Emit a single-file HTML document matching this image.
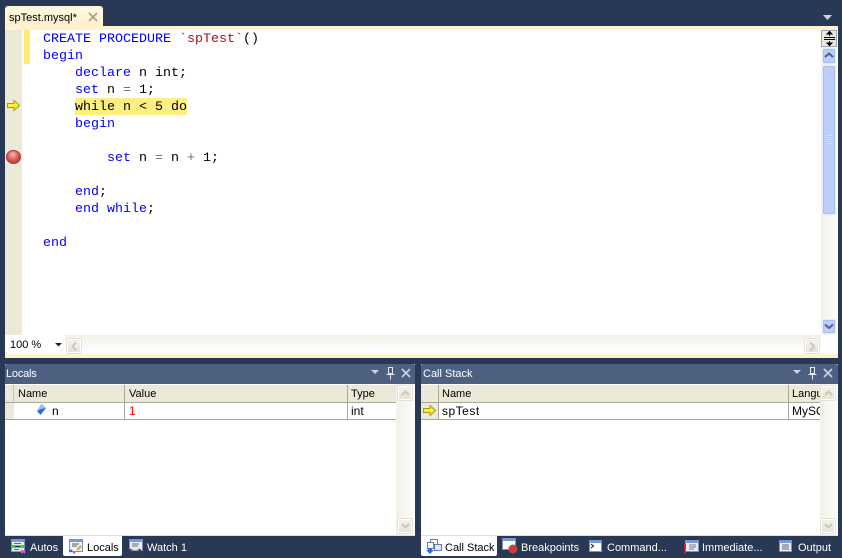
<!DOCTYPE html>
<html><head><meta charset="utf-8">
<style>
html,body{margin:0;padding:0;width:842px;height:558px;overflow:hidden;background:#293955}
div,span{position:absolute;box-sizing:border-box}
svg{position:absolute;overflow:visible}
.ui{font:11px/14px "Liberation Sans",sans-serif;color:#000;white-space:nowrap}
.r{font-size:12px}
.c{font:13.33px/17px "Liberation Mono",monospace;white-space:pre;color:#000;left:43px;height:17px}
.c b{font-weight:normal;color:#0000ff}
.c i{font-style:normal;color:#a31515}
.c u{text-decoration:none;color:#707070}
.hd{background:#ece9d8}
.sep{background:#aca899;width:1px}
.btn{border:1px solid #e4e2d6;border-radius:2px;background:linear-gradient(#f3f2ea,#e6e4d8);box-shadow:inset 0 0 0 1px #fff}
.bb{border:1px solid #e4ebfc;border-radius:2px;background:#bccffa;box-shadow:0 0 0 1px #a9c0f4 inset}
.w{color:#fff}
</style></head><body>
<!-- tab -->
<div style="left:5px;top:6px;width:98px;height:20px;background:linear-gradient(#fff8e2,#fff0cc);border-radius:3px 3px 0 0"></div>
<div class="ui" style="left:9px;top:11px;">spTest.mysql*</div>
<svg style="left:88px;top:12px" width="11" height="11"><path d="M1 1L9 9M9 1L1 9" stroke="#a39e86" stroke-width="1.600"/></svg>
<svg style="left:823px;top:15px" width="10" height="6"><path d="M0 0H9L4.500 5Z" fill="#ced4df"/></svg>

<!-- editor -->
<div style="left:5px;top:26px;width:833px;height:332px;background:#fff"></div>
<div style="left:5px;top:26px;width:833px;height:4px;background:#fff2cf"></div>
<div style="left:5px;top:354px;width:833px;height:4px;background:#fff2cf"></div>
<div style="left:5px;top:30px;width:17px;height:305px;background:#ece9d8"></div>
<div style="left:24px;top:30px;width:6px;height:34px;background:#ffe96e"></div>
<div style="left:75px;top:98px;width:112px;height:17px;background:#ffee80"></div>

<div class="c" style="top:31px"><b>CREATE</b> <b>PROCEDURE</b> <i>`spTest`</i>()</div>
<div class="c" style="top:48px"><b>begin</b></div>
<div class="c" style="top:65px">    <b>declare</b> n int;</div>
<div class="c" style="top:82px">    <b>set</b> n <u>=</u> 1;</div>
<div class="c" style="top:99px">    while n &lt; 5 do</div>
<div class="c" style="top:116px">    <b>begin</b></div>
<div class="c" style="top:150px">        <b>set</b> n <u>=</u> n <u>+</u> 1;</div>
<div class="c" style="top:184px">    <b>end</b>;</div>
<div class="c" style="top:201px">    <b>end</b> <b>while</b>;</div>
<div class="c" style="top:235px"><b>end</b></div>

<svg style="left:7px;top:100px" width="14" height="12"><path d="M.5 3.500H7V.5L12.500 5.500 7 10.500V7.500H.5Z" fill="#ffee30" stroke="#a89a20"/></svg>
<div style="left:6px;top:150px;width:15px;height:14px;border-radius:50%;background:radial-gradient(circle at 45% 30%,#f4b8b0,#d8524a 55%,#a42c28);border:1px solid #a83c38"></div>

<!-- editor scrollbar -->
<div style="left:821px;top:30px;width:16px;height:305px;background:linear-gradient(90deg,#f2f1ea,#fcfcfa)"></div>
<div style="left:821px;top:30px;width:16px;height:17px;background:#ece9e0;border:1px solid #9aa3b5"></div>
<svg style="left:823px;top:31px" width="13" height="15"><path d="M1 6.500H12M1 8.500H12M6.500 0V5M6.500 10V15" stroke="#000"/><path d="M4 3L6.500 .5 9 3ZM4 12L6.500 14.500 9 12Z" fill="#000" stroke="#000"/></svg>
<div class="bb" style="left:822px;top:48px;width:14px;height:16px"></div>
<svg style="left:824px;top:52px" width="10" height="7"><path d="M1 5L5 1.500 9 5" fill="none" stroke="#4c6290" stroke-width="2"/></svg>
<div class="bb" style="left:822px;top:65px;width:14px;height:150px"></div>
<div style="left:826px;top:135px;width:6px;height:9px;background:repeating-linear-gradient(#d7e3fd 0 1px,#aec4f6 1px 2px)"></div>
<div class="bb" style="left:822px;top:319px;width:14px;height:15px"></div>
<svg style="left:824px;top:323px" width="10" height="7"><path d="M1 1.500L5 5 9 1.500" fill="none" stroke="#4c6290" stroke-width="2"/></svg>

<!-- zoom + hscroll -->
<div style="left:5px;top:335px;width:816px;height:19px;background:linear-gradient(#f1f0e8,#fcfcfb 70%,#fff)"></div>
<div style="left:5px;top:335px;width:60px;height:19px;background:#fff"></div>
<div class="ui" style="left:10px;top:338px;">100 %</div>
<svg style="left:55px;top:343px" width="8" height="4"><path d="M0 0H7L3.500 3.500Z" fill="#222"/></svg>
<div class="btn" style="left:66px;top:338px;width:16px;height:16px"></div>
<svg style="left:71px;top:342px" width="7" height="9"><path d="M5 .5L1.500 4.500 5 8.500" fill="none" stroke="#c9c8bd" stroke-width="2"/></svg>
<div class="btn" style="left:804px;top:338px;width:16px;height:16px"></div>
<svg style="left:809px;top:342px" width="7" height="9"><path d="M1.500 .5L5 4.500 1.500 8.500" fill="none" stroke="#c9c8bd" stroke-width="2"/></svg>

<!-- Locals -->
<div style="left:5px;top:364px;width:410px;height:172px;background:#fff"></div>
<div style="left:5px;top:364px;width:410px;height:20px;background:#4d6082;border-radius:2px 2px 0 0"></div>
<div class="ui w" style="left:6px;top:367px;letter-spacing:-.2px">Locals</div>
<svg style="left:371px;top:370px" width="9" height="5"><path d="M0 0H8L4 4Z" fill="#ced4df"/></svg>
<svg style="left:386px;top:367px" width="9" height="13"><path d="M2.500 .5H6.500V6.500H2.500ZM.5 7.500H8.500M4.500 8V12.500" fill="none" stroke="#e6eaf0"/></svg>
<svg style="left:401px;top:368px" width="11" height="11"><path d="M1 1L9 9M9 1L1 9" stroke="#ced4df" stroke-width="1.600"/></svg>
<div class="hd" style="left:5px;top:385px;width:391px;height:17px"></div>
<div style="left:5px;top:402px;width:391px;height:1px;background:#aca899"></div>
<div style="left:5px;top:419px;width:391px;height:1px;background:#aca899"></div>
<div class="sep" style="left:13px;top:385px;height:17px;background:#c8c5b4"></div>
<div style="left:5px;top:403px;width:9px;height:16px;background:#ece9d8"></div>
<div class="sep" style="left:124px;top:385px;height:35px"></div>
<div class="sep" style="left:347px;top:385px;height:35px"></div>
<div class="ui" style="left:18px;top:387px;">Name</div>
<div class="ui" style="left:129px;top:387px;">Value</div>
<div class="ui" style="left:351px;top:387px;">Type</div>
<svg style="left:36px;top:404px" width="11" height="12"><path d="M5.500 0L10 4 4.500 11 1 7Z" fill="#2f6fd0"/><path d="M5.500 0L10 4 5 5 1 7Z" fill="#8fc0f4"/></svg>
<div class="ui r" style="left:52px;top:404px">n</div>
<div class="ui r" style="left:129px;top:404px;color:#f00">1</div>
<div class="ui r" style="left:351px;top:404px">int</div>
<div style="left:396px;top:384px;width:19px;height:152px;background:linear-gradient(90deg,#f2f1e8,#fdfdfb)"></div>
<div class="btn" style="left:397px;top:385px;width:16px;height:16px"></div>
<svg style="left:401px;top:390px" width="9" height="6"><path d="M1 5L4.500 1.500 8 5" fill="none" stroke="#c9c8bd" stroke-width="2"/></svg>
<div class="btn" style="left:397px;top:518px;width:16px;height:16px"></div>
<svg style="left:401px;top:523px" width="9" height="6"><path d="M1 1L4.500 4.500 8 1" fill="none" stroke="#c9c8bd" stroke-width="2"/></svg>
<div style="left:5px;top:535px;width:410px;height:1px;background:#e4e1d2"></div>

<!-- Call Stack -->
<div style="left:421px;top:364px;width:417px;height:172px;background:#fff"></div>
<div style="left:421px;top:364px;width:417px;height:20px;background:#4d6082;border-radius:2px 2px 0 0"></div>
<div class="ui w" style="left:423px;top:367px;">Call Stack</div>
<svg style="left:793px;top:370px" width="9" height="5"><path d="M0 0H8L4 4Z" fill="#ced4df"/></svg>
<svg style="left:808px;top:367px" width="9" height="13"><path d="M2.500 .5H6.500V6.500H2.500ZM.5 7.500H8.500M4.500 8V12.500" fill="none" stroke="#e6eaf0"/></svg>
<svg style="left:823px;top:368px" width="11" height="11"><path d="M1 1L9 9M9 1L1 9" stroke="#ced4df" stroke-width="1.600"/></svg>
<div class="hd" style="left:421px;top:385px;width:399px;height:17px"></div>
<div style="left:421px;top:402px;width:399px;height:1px;background:#aca899"></div>
<div style="left:421px;top:419px;width:399px;height:1px;background:#aca899"></div>
<div style="left:421px;top:403px;width:17px;height:16px;background:#ece9d8"></div>
<div class="sep" style="left:438px;top:385px;height:35px"></div>
<div class="sep" style="left:788px;top:385px;height:35px"></div>
<div class="ui" style="left:442px;top:387px;">Name</div>
<div class="ui r" style="left:442px;top:404px;letter-spacing:.5px">spTest</div>
<div class="ui" style="left:792px;top:387px;width:28px;overflow:hidden">Language</div>
<div class="ui r" style="left:792px;top:404px;width:28px;overflow:hidden">MySQL</div>
<svg style="left:423px;top:405px" width="14" height="12"><path d="M.5 3.500H7V.5L12.500 5.500 7 10.500V7.500H.5Z" fill="#ffee30" stroke="#a89a20"/></svg>
<div style="left:820px;top:384px;width:18px;height:152px;background:linear-gradient(90deg,#f2f1e8,#fdfdfb)"></div>
<div class="btn" style="left:820px;top:385px;width:16px;height:16px"></div>
<svg style="left:824px;top:390px" width="9" height="6"><path d="M1 5L4.500 1.500 8 5" fill="none" stroke="#c9c8bd" stroke-width="2"/></svg>
<div class="btn" style="left:820px;top:518px;width:16px;height:16px"></div>
<svg style="left:824px;top:523px" width="9" height="6"><path d="M1 1L4.500 4.500 8 1" fill="none" stroke="#c9c8bd" stroke-width="2"/></svg>
<div style="left:421px;top:535px;width:417px;height:1px;background:#e4e1d2"></div>

<!-- bottom tabs -->
<div style="left:63px;top:536px;width:59px;height:20px;background:#fff;border-radius:0 0 2px 2px"></div>
<div style="left:421px;top:536px;width:76px;height:20px;background:#fff;border-radius:0 0 2px 2px"></div>

<svg style="left:11px;top:539px" width="15" height="15"><rect x=".5" y=".5" width="13" height="12" fill="#e8edf8" stroke="#7f93b8"/><rect x="1" y="1" width="12" height="2" fill="#6d9bea"/><path d="M3 4.500H10" stroke="#667"/><rect x="1" y="6" width="12" height="3" fill="#2fe010"/><path d="M4 7.500H9" stroke="#154"/><path d="M3 10.500H8" stroke="#667"/><path d="M10 11L14 14M14 11L10 14" stroke="#d060d0" stroke-width="1.500"/></svg>
<div class="ui w" style="left:30px;top:541px;">Autos</div>
<svg style="left:69px;top:539px" width="15" height="15"><rect x=".5" y=".5" width="13" height="12" fill="#f0f3fa" stroke="#7f93b8"/><rect x="1" y="1" width="12" height="2" fill="#6d9bea"/><path d="M3 5H10M3 7H8" stroke="#556"/><path d="M.5 13L3 11" stroke="#3060c0" stroke-width="2"/><path d="M8 11L12 7" stroke="#e0b020" stroke-width="2.500"/><path d="M4 13L6 14" stroke="#c050c0" stroke-width="2"/></svg>
<div class="ui" style="left:87px;top:541px;">Locals</div>
<svg style="left:128px;top:539px" width="15" height="15"><rect x="1.500" y=".5" width="13" height="11" fill="#e8edf8" stroke="#7f93b8"/><rect x="2" y="1" width="12" height="2" fill="#6d9bea"/><path d="M4 5H11M4 7H10" stroke="#667"/><circle cx="3" cy="12" r="2.200" fill="#3a3f48"/><circle cx="11" cy="12" r="2.200" fill="#3a3f48"/><path d="M3 11H11" stroke="#ccc"/></svg>
<div class="ui w" style="left:147px;top:541px;">Watch 1</div>

<svg style="left:426px;top:539px" width="16" height="15"><rect x="4.500" y=".5" width="7" height="6" fill="#fff" stroke="#6a7fa8"/><rect x="8.500" y="5.500" width="7" height="6" fill="#dbe6fb" stroke="#6a7fa8"/><rect x="1.500" y="3.500" width="6" height="6" fill="#fff" stroke="#6a7fa8"/><path d="M2 9H6V11H8L4 15 0 11H2Z" fill="#2f6fd0"/></svg>
<div class="ui" style="left:445px;top:541px;">Call Stack</div>
<svg style="left:502px;top:538px" width="16" height="16"><rect x=".5" y=".5" width="13" height="11" fill="#fff" stroke="#7f93b8"/><rect x="1" y="1" width="13" height="2" fill="#6d9bea"/><circle cx="11" cy="11" r="4.500" fill="#c8403a"/></svg>
<div class="ui w" style="left:521px;top:541px;">Breakpoints</div>
<svg style="left:589px;top:540px" width="14" height="13"><rect x=".5" y=".5" width="12" height="11" fill="#fff" stroke="#7f93b8"/><rect x="1" y="1" width="11" height="2" fill="#6d9bea"/><path d="M2 4L4.500 6 2 8" fill="none" stroke="#111"/></svg>
<div class="ui w" style="left:607px;top:541px;">Command...</div>
<svg style="left:683px;top:540px" width="16" height="14"><rect x="2.500" y=".5" width="13" height="11" fill="#e8edf8" stroke="#7f93b8"/><rect x="3" y="1" width="12" height="2" fill="#6d9bea"/><path d="M6 5H13M6 7H13M6 9H11" stroke="#778"/><path d="M2 4V9M2 11V13" stroke="#e02020" stroke-width="2"/></svg>
<div class="ui w" style="left:702px;top:541px;">Immediate...</div>
<svg style="left:779px;top:540px" width="14" height="13"><rect x=".5" y=".5" width="12" height="11" fill="#e8edf8" stroke="#7f93b8"/><rect x="1" y="1" width="11" height="2" fill="#6d9bea"/><path d="M3 5H10M3 7H10M3 9H10" stroke="#667"/></svg>
<div class="ui w" style="left:798px;top:541px;">Output</div>
</body></html>
